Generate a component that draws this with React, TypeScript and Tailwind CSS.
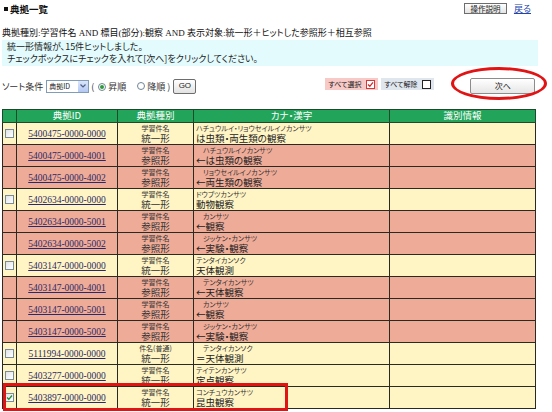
import React from 'react';

type Row = { id: string; type: string; form: string; kana: string; kanji: string; main: boolean; checked?: boolean; indent?: boolean };

const rows: Row[] = [
  { id: '5400475-0000-0000', type: '学習件名', form: '統一形', kana: 'ハチュウルイ・リョウセイルイノカンサツ', kanji: 'は虫類・両生類の観察', main: true },
  { id: '5400475-0000-4001', type: '学習件名', form: '参照形', kana: 'ハチュウルイノカンサツ', kanji: '←は虫類の観察', main: false, indent: true },
  { id: '5400475-0000-4002', type: '学習件名', form: '参照形', kana: 'リョウセイルイノカンサツ', kanji: '←両生類の観察', main: false, indent: true },
  { id: '5402634-0000-0000', type: '学習件名', form: '統一形', kana: 'ドウブツカンサツ', kanji: '動物観察', main: true },
  { id: '5402634-0000-5001', type: '学習件名', form: '参照形', kana: 'カンサツ', kanji: '←観察', main: false, indent: true },
  { id: '5402634-0000-5002', type: '学習件名', form: '参照形', kana: 'ジッケン・カンサツ', kanji: '←実験・観察', main: false, indent: true },
  { id: '5403147-0000-0000', type: '学習件名', form: '統一形', kana: 'テンタイカンソク', kanji: '天体観測', main: true },
  { id: '5403147-0000-4001', type: '学習件名', form: '参照形', kana: 'テンタイカンサツ', kanji: '←天体観察', main: false, indent: true },
  { id: '5403147-0000-5001', type: '学習件名', form: '参照形', kana: 'カンサツ', kanji: '←観察', main: false, indent: true },
  { id: '5403147-0000-5002', type: '学習件名', form: '参照形', kana: 'ジッケン・カンサツ', kanji: '←実験・観察', main: false, indent: true },
  { id: '5111994-0000-0000', type: '件名(普通)', form: '統一形', kana: 'テンタイカンソク', kanji: '＝天体観測', main: true, indent: true },
  { id: '5403277-0000-0000', type: '学習件名', form: '統一形', kana: 'テイテンカンサツ', kanji: '定点観察', main: true },
  { id: '5403897-0000-0000', type: '学習件名', form: '統一形', kana: 'コンチュウカンサツ', kanji: '昆虫観察', main: true, checked: true },
];

function Box({ checked }: { checked?: boolean }) {
  return (
    <span className="inline-flex items-center justify-center w-[9px] h-[9px] border border-[#7a8b9c] bg-gradient-to-br from-[#dfe3e8] to-[#ffffff]">
      {checked && (
        <svg width="7" height="7" viewBox="0 0 7 7">
          <path d="M1 3.5 L2.8 5.3 L6 1.5" stroke="#1f8a2e" strokeWidth="1.3" fill="none" />
        </svg>
      )}
    </span>
  );
}

function Radio({ on }: { on?: boolean }) {
  return (
    <span className="inline-flex items-center justify-center w-[8px] h-[8px] rounded-full border border-[#6f8596] bg-white">
      {on && <span className="w-[4px] h-[4px] rounded-full bg-[#2f9a3a]" />}
    </span>
  );
}

export default function App() {
  const jp = "font-['Noto_Sans_CJK_JP',sans-serif] [font-feature-settings:'palt']";
  const mix = "font-['Liberation_Serif','Noto_Sans_CJK_JP',serif] [font-feature-settings:'palt']";
  return (
    <div className={`relative w-[552px] h-[412px] overflow-hidden bg-white text-[#111] ${jp}`}>
      {/* top bar */}
      <div className="flex items-start justify-between h-[17px] pl-[4px] pr-[21px] pt-[3px]">
        <div className="font-bold text-[9.5px] leading-[12px] flex items-center gap-[1px]">
          <span className="inline-block w-[4px] h-[4px] bg-[#111] mr-[1px]" />
          <span>典拠一覧</span>
        </div>
        <div className="flex items-center gap-[7px]">
          <button className="w-[43px] h-[11px] border border-[#6d6d6d] bg-gradient-to-b from-[#ffffff] to-[#e4e4e4] text-[7.5px] leading-none text-[#222] flex items-center justify-center">
            操作説明
          </button>
          <a className="text-[9px] leading-none text-[#2244aa] underline">戻る</a>
        </div>
      </div>

      {/* query */}
      <div className={`mt-[10px] ml-[2px] text-[9px] leading-[12px] whitespace-nowrap ${mix}`}>
        典拠種別:学習件名 AND 標目(部分):観察 AND 表示対象:統一形＋ヒットした参照形＋相互参照
      </div>

      {/* info box */}
      <div className="mt-[1px] ml-[2px] w-[536px] h-[26px] bg-[#e3fbfd] pl-[5px] pt-[1px] text-[9px] leading-[12px] text-[#222]">
        <div>統一形情報が、15件ヒットしました。</div>
        <div>チェックボックスにチェックを入れて[次へ]をクリックしてください。</div>
      </div>

      {/* sort row */}
      <div className="mt-[12px] h-[16px] flex items-center pl-[2px] text-[9px] leading-none text-[#333]">
        <span>ソート条件</span>
        <span className="ml-[3px] w-[43px] h-[13px] border border-[#7f9db9] bg-white flex items-center">
          <span className="flex-1 text-[7px] pl-[2px] text-[#222]">典拠ID</span>
          <span className="w-[10px] h-full bg-gradient-to-b from-[#dbe6fb] to-[#b3c8f3] flex items-center justify-center">
            <svg width="6" height="4" viewBox="0 0 6 4"><path d="M0.5 0.5 L3 3 L5.5 0.5" stroke="#4d6185" strokeWidth="1.2" fill="none" /></svg>
          </span>
        </span>
        <span className="ml-[2px]">(</span>
        <span className="ml-[4px]"><Radio on /></span>
        <span className="ml-[2px]">昇順</span>
        <span className="ml-[11px]"><Radio /></span>
        <span className="ml-[2px]">降順</span>
        <span className="ml-[2px]">)</span>
        <button className="ml-[3px] w-[23px] h-[15px] border border-[#6d6d6d] rounded-[2px] bg-gradient-to-b from-[#ffffff] to-[#e2e2e2] text-[8px] text-[#222] flex items-center justify-center font-['Liberation_Sans',sans-serif]">
          GO
        </button>
        <div className="ml-[129px] w-[53px] h-[12px] mb-[4px] bg-[#f7c9c7] flex items-center justify-between pl-[3px] pr-[3px] text-[7px] text-[#222] whitespace-nowrap">
          <span>すべて選択</span>
          <span className="w-[9px] h-[9px] border border-[#d23a3a] bg-white flex items-center justify-center">
            <svg width="7" height="7" viewBox="0 0 7 7"><path d="M1 3.5 L2.8 5.3 L6 1.3" stroke="#d12a2a" strokeWidth="1.3" fill="none" /></svg>
          </span>
        </div>
        <div className="ml-[3px] w-[53px] h-[12px] mb-[4px] bg-[#dfe6ee] flex items-center justify-between pl-[3px] pr-[3px] text-[7px] text-[#222] whitespace-nowrap">
          <span>すべて解除</span>
          <span className="w-[9px] h-[9px] border border-[#222] bg-white" />
        </div>
        <button className="ml-[36px] w-[65px] h-[16px] border border-[#8c8c8c] rounded-[2px] bg-gradient-to-b from-[#ffffff] to-[#e6e6e6] text-[8px] text-[#222] flex items-center justify-center">
          次へ
        </button>
      </div>

      {/* table */}
      <div className="mt-[15px] ml-[2px]">
        <table className="border-collapse table-fixed w-[533px] text-[9px] leading-none">
          <colgroup>
            <col className="w-[14px]" />
            <col className="w-[101px]" />
            <col className="w-[76px]" />
            <col className="w-[196px]" />
            <col className="w-[146px]" />
          </colgroup>
          <thead>
            <tr className="h-[13px] bg-[#22a55b] text-white text-[9.5px] leading-none">
              <th className="border border-[#1d4a2a] font-normal p-0"></th>
              <th className="border border-[#1d4a2a] font-normal p-0">典拠ID</th>
              <th className="border border-[#1d4a2a] font-normal p-0">典拠種別</th>
              <th className="border border-[#1d4a2a] font-normal p-0">カナ・漢字</th>
              <th className="border border-[#1d4a2a] font-normal p-0">識別情報</th>
            </tr>
          </thead>
          <tbody>
            {rows.map((r) => (
              <tr key={r.id} className={`h-[22px] ${r.main ? 'bg-[#fff4c4]' : 'bg-[#eeab98]'}`}>
                <td className="border border-[#2b2a22] p-0 align-middle">
                  {r.main && <div className="flex justify-center"><Box checked={r.checked} /></div>}
                </td>
                <td className="border border-[#2b2a22] p-0 text-center align-middle">
                  <div className="text-[9.5px] leading-[10px] underline text-[#2c2a66] font-['Liberation_Serif',serif]">{r.id}</div>
                </td>
                <td className="border border-[#2b2a22] p-0 text-center align-middle">
                  <div className="text-[7px] leading-[9px] text-[#333] whitespace-nowrap">{r.type}</div>
                  <div className="text-[9.5px] leading-[11px] text-[#333]">{r.form}</div>
                </td>
                <td className="border border-[#2b2a22] p-0 pl-[2px] align-middle whitespace-nowrap overflow-hidden">
                  <div className={`text-[7px] leading-[9px] text-[#333] ${r.indent ? 'pl-[7px]' : ''}`}>{r.kana}</div>
                  <div className="text-[9.5px] leading-[11px] text-[#222]">{r.kanji}</div>
                </td>
                <td className="border border-[#2b2a22] p-0"></td>
              </tr>
            ))}
          </tbody>
        </table>
      </div>

      {/* annotations */}
      <div className="absolute left-[451px] top-[67px] w-[96px] h-[33px] rounded-[50%] border-[3px] border-[#e01414]" />
      <div className="absolute left-[3px] top-[383px] w-[285px] h-[28px] border-[3px] border-[#e01414]" />
    </div>
  );
}
